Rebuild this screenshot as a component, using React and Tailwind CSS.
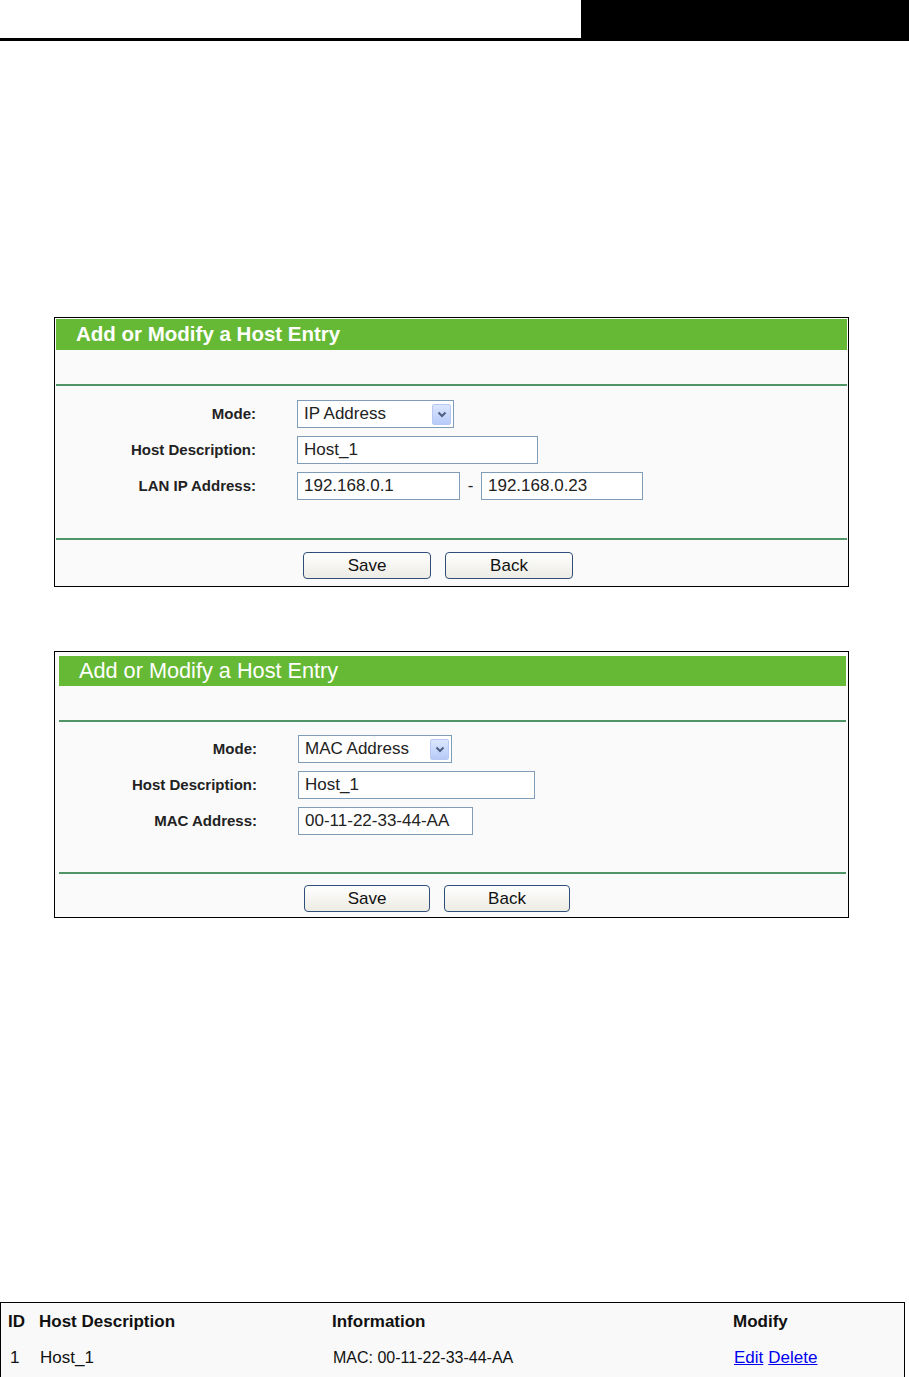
import React from "react";

const font = { fontFamily: '"Liberation Sans", Arial, sans-serif' };

function Chevron() {
  return (
    <span className="flex h-[21px] w-[19px] items-center justify-center rounded-[2px] border border-[#b9c9f3] bg-gradient-to-b from-[#dce6fd] to-[#b7cbf8]">
      <svg width="10" height="7" viewBox="0 0 10 7">
        <path d="M1.5 1.5 L5 5 L8.5 1.5" fill="none" stroke="#4d5f84" strokeWidth="2" />
      </svg>
    </span>
  );
}

function Select({ value, w }) {
  return (
    <div className={`flex h-[28px] items-center justify-between border border-[#7f9db9] bg-white pl-[6px] pr-[2px] text-[17px] text-[#222] ${w}`}>
      <span>{value}</span>
      <Chevron />
    </div>
  );
}

function Field({ value, w }) {
  return (
    <div className={`flex h-[28px] items-center border border-[#7f9db9] bg-white px-[6px] text-[17px] text-[#222] ${w}`}>
      {value}
    </div>
  );
}

function Btn({ children, w }) {
  return (
    <div className={`flex h-[27px] items-center justify-center rounded-[4px] border border-[#2f4f78] bg-gradient-to-b from-white to-[#ecebe4] text-[17px] text-[#111] ${w}`}>
      {children}
    </div>
  );
}

function Row({ label, labelW, children }) {
  return (
    <div className="flex items-center gap-[41px]">
      <div className={`text-right text-[15px] font-bold text-[#222] ${labelW}`}>{label}</div>
      {children}
    </div>
  );
}

export default function App() {
  return (
    <div className="relative h-[1377px] w-[909px] overflow-hidden bg-white" style={font}>
      {/* page header bar */}
      <div className="flex h-[38px]">
        <div className="flex-1 bg-white"></div>
        <div className="w-[328px] bg-black"></div>
      </div>
      <div className="h-[3px] bg-black"></div>

      {/* panel 1: IP address mode */}
      <div className="ml-[54px] mt-[276px] w-[795px] border border-black bg-[#fafafa] p-px">
        <div className="flex h-[31px] items-center bg-[#66b934] pl-[20px] text-[20.5px] font-bold text-white">
          Add or Modify a Host Entry
        </div>
        <div className="h-[34px]"></div>
        <div className="h-[2px] bg-[#4f9566]"></div>
        <div className="flex flex-col gap-[8px] pt-[14px] pb-[38px]">
          <Row label="Mode:" labelW="w-[200px]">
            <Select value="IP Address" w="w-[157px]" />
          </Row>
          <Row label="Host Description:" labelW="w-[200px]">
            <Field value="Host_1" w="w-[241px]" />
          </Row>
          <Row label="LAN IP Address:" labelW="w-[200px]">
            <div className="flex items-center">
              <Field value="192.168.0.1" w="w-[163px]" />
              <span className="w-[21px] text-center text-[17px] text-[#222]">-</span>
              <Field value="192.168.0.23" w="w-[162px]" />
            </div>
          </Row>
        </div>
        <div className="h-[2px] bg-[#4f9566]"></div>
        <div className="flex gap-[14px] pl-[247px] pt-[12px] pb-[6px]">
          <Btn w="w-[128px]">Save</Btn>
          <Btn w="w-[128px]">Back</Btn>
        </div>
      </div>

      {/* panel 2: MAC address mode */}
      <div className="ml-[54px] mt-[64px] w-[795px] border border-black bg-[#fafafa] pl-[4px] pr-[2px] pt-[4px]">
        <div className="flex h-[30px] items-center bg-[#66b934] pl-[20px] text-[21.7px] text-white">
          Add or Modify a Host Entry
        </div>
        <div className="h-[34px]"></div>
        <div className="h-[2px] bg-[#4f9566]"></div>
        <div className="flex flex-col gap-[8px] pt-[13px] pb-[37px]">
          <Row label="Mode:" labelW="w-[198px]">
            <Select value="MAC Address" w="w-[154px]" />
          </Row>
          <Row label="Host Description:" labelW="w-[198px]">
            <Field value="Host_1" w="w-[237px]" />
          </Row>
          <Row label="MAC Address:" labelW="w-[198px]">
            <Field value="00-11-22-33-44-AA" w="w-[175px]" />
          </Row>
        </div>
        <div className="h-[2px] bg-[#4f9566]"></div>
        <div className="flex gap-[14px] pl-[245px] pt-[11px] pb-[5px]">
          <Btn w="w-[126px]">Save</Btn>
          <Btn w="w-[126px]">Back</Btn>
        </div>
      </div>

      {/* host list table */}
      <div className="mt-[384px] h-[120px] w-[905px] border border-black bg-[#f9f9f9]">
        <div className="flex h-[38px] items-center text-[17px] font-bold text-[#111]">
          <div className="w-[38px] pl-[7px]">ID</div>
          <div className="w-[293px]">Host Description</div>
          <div className="w-[401px]">Information</div>
          <div>Modify</div>
        </div>
        <div className="flex h-[34px] items-center text-[17px] text-[#111]">
          <div className="w-[38px] pl-[9px]">1</div>
          <div className="w-[293px] pl-px">Host_1</div>
          <div className="w-[401px] pl-px text-[16px]">MAC: 00-11-22-33-44-AA</div>
          <div className="flex gap-[5px] pl-px">
            <a href="#" className="text-[#0000ee] underline">Edit</a>
            <a href="#" className="text-[#0000ee] underline">Delete</a>
          </div>
        </div>
      </div>
    </div>
  );
}
